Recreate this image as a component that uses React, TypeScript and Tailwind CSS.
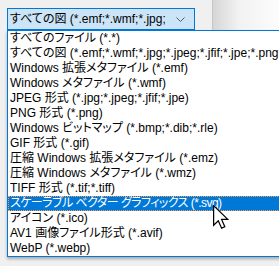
import React from "react";

const items = [
  "すべてのファイル (*.*)",
  "すべての図 (*.emf;*.wmf;*.jpg;*.jpeg;*.jfif;*.jpe;*.png;*.bmp;*.dib;*.rle;*.gif)",
  "Windows 拡張メタファイル (*.emf)",
  "Windows メタファイル (*.wmf)",
  "JPEG 形式 (*.jpg;*.jpeg;*.jfif;*.jpe)",
  "PNG 形式 (*.png)",
  "Windows ビットマップ (*.bmp;*.dib;*.rle)",
  "GIF 形式 (*.gif)",
  "圧縮 Windows 拡張メタファイル (*.emz)",
  "圧縮 Windows メタファイル (*.wmz)",
  "TIFF 形式 (*.tif;*.tiff)",
  "スケーラブル ベクター グラフィックス (*.svg)",
  "アイコン (*.ico)",
  "AV1 画像ファイル形式 (*.avif)",
  "WebP (*.webp)",
];

const SELECTED = 11;

export default function App() {
  return (
    <div
      className="relative w-[279px] h-[266px] overflow-hidden bg-[#f0f0f0] text-[12px] text-black [font-feature-settings:'palt']"
      style={{ fontFamily: '"Liberation Sans", "Noto Sans CJK JP", sans-serif' }}
    >
      <div className="flex h-[30px]">
        <div className="w-[212px] pt-[8px] pl-[7px]">
          <div className="flex h-[22px] w-[188px] items-center border border-[#0078d7] bg-[#cce4f7]">
            <div className="w-[157px] overflow-hidden whitespace-nowrap pl-[2px] leading-[20px]">
              すべての図 (*.emf;*.wmf;*.jpg;*.jpeg;*.jfif;*.jpe;*.png)
            </div>
            <div className="flex flex-1 items-center justify-center pl-[2px]">
              <svg width="9" height="5" viewBox="0 0 9 5">
                <path d="M0.5 0.5 L4.5 4.5 L8.5 0.5" fill="none" stroke="#5a5a5a" strokeWidth="1" />
              </svg>
            </div>
          </div>
        </div>
        <div className="flex-1 border-l border-[#c6c6c6] bg-[linear-gradient(to_right,#d6d6d6,#f2f2f2_26px,#fcfcfc)]" />
      </div>

      <div className="absolute left-[7px] top-[30px] w-[300px] border border-[#0078d7] bg-white shadow-[0_2px_3px_rgba(0,0,0,0.3)]">
        {items.map((t, i) =>
          i === SELECTED ? (
            <div
              key={i}
              className="h-[15px] whitespace-nowrap border border-dotted border-[#ff9c45] bg-[#0078d7] pl-[1px] leading-[13px] tracking-[-0.55px] text-white"
            >
              {t}
            </div>
          ) : (
            <div key={i} className="h-[15px] whitespace-nowrap pl-[2px] leading-[15px]">
              {t}
            </div>
          )
        )}
      </div>

      <svg
        className="absolute left-[213px] top-[205px]"
        width="16"
        height="24"
        viewBox="0 0 13 19.5"
      >
        <path
          d="M0.5 0.5 L0.5 16.5 L4.3 12.8 L7 18.8 L9.6 17.7 L7 11.7 L12 11.7 Z"
          fill="#fff"
          stroke="#000"
          strokeWidth="1"
          strokeLinejoin="miter"
        />
      </svg>
    </div>
  );
}
